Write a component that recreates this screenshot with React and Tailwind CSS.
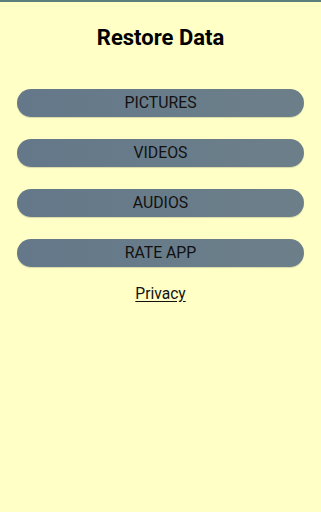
export default function App() {
    const items = ["PICTURES", "VIDEOS", "AUDIOS", "RATE APP"];

    return (
        <div className="min-h-[512px] w-full bg-[#ffffc6] border-t-2 border-[#5b7f7c] font-['Roboto',sans-serif]">
            <h1 className="pt-[22px] text-center text-[22px] leading-[28px] font-bold text-black">Restore Data</h1>
            <div className="mt-[37px] flex flex-col gap-[22px] px-[17px]">
                {items.map((label) => (
                    <button
                        key={label}
                        className="h-[28px] w-full rounded-full bg-gradient-to-r from-[#65788a] to-[#6c7f89] text-[15.8px] text-[#111] shadow-[0_1px_1px_rgba(0,0,0,0.15)]"
                    >
                        {label}
                    </button>
                ))}
            </div>
            <p className="mt-[17px] text-center text-[15.6px] leading-[20px] text-[#111] underline underline-offset-2">Privacy</p>
        </div>
    );
}
